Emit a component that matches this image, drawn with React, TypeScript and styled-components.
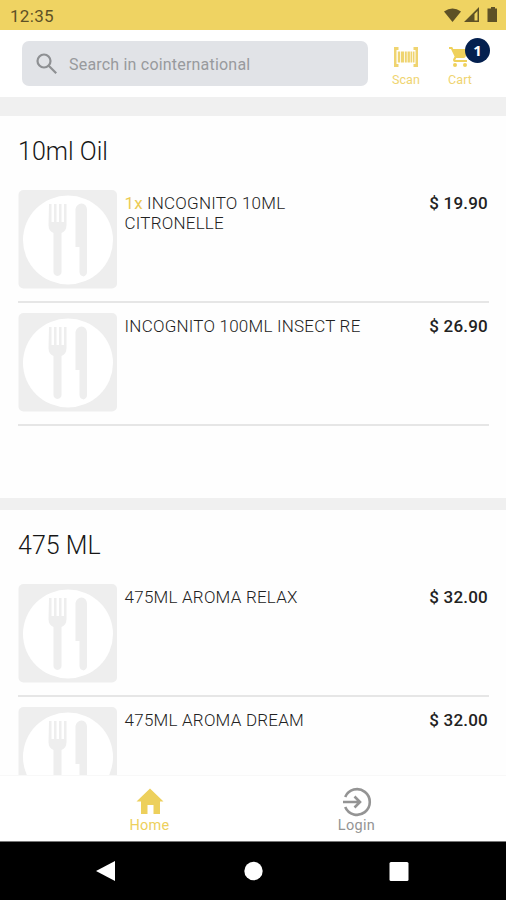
import React from "react";
import styled, { createGlobalStyle } from "styled-components";

const GlobalStyle = createGlobalStyle`
  * { box-sizing: border-box; }
  body { margin: 0; background: #fff; font-family: Roboto, "Liberation Sans", sans-serif; }
`;

const Screen = styled.div`
  width: 506px;
  height: 900px;
  display: flex;
  flex-direction: column;
  overflow: hidden;
  background: #fefefe;
`;

const StatusBar = styled.header`
  flex: none;
  height: 30px;
  padding: 2px 8px 0 10px;
  display: flex;
  align-items: center;
  justify-content: space-between;
  background: #efd362;
  color: #5e5126;
  font-size: 17px;
  letter-spacing: 0.3px;
`;

const StatusIcons = styled.svg`
  display: block;
  width: 56px;
  height: 20px;
`;

const TopBar = styled.div`
  flex: none;
  height: 67px;
  padding: 11px 30px 0 22px;
  display: flex;
  background: #fff;
`;

const SearchField = styled.div`
  width: 346px;
  height: 45px;
  padding: 2px 0 0 14px;
  display: flex;
  align-items: center;
  gap: 11px;
  border-radius: 7px;
  background: #e1e3e7;
  color: #989a9d;
  font-size: 16px;
  letter-spacing: 0.2px;
  white-space: nowrap;

  svg { margin-top: -2px; }
`;

const Action = styled.div<{ $offset: number }>`
  position: relative;
  width: 32px;
  margin-left: ${(p) => p.$offset}px;
  padding-top: 6px;
  display: flex;
  flex-direction: column;
  align-items: center;
  color: #efd470;
  font-size: 12.5px;
  line-height: 15px;
  font-weight: 400;
  letter-spacing: 0.1px;

  svg { display: block; margin-bottom: 4px; }
`;

const Badge = styled.span`
  position: absolute;
  top: -3px;
  left: 21px;
  width: 25px;
  height: 25px;
  border-radius: 50%;
  background: #04204f;
  color: #fff;
  font: 700 15px/25px "Open Sans", sans-serif;
  text-align: center;
`;

const Band = styled.div<{ $height: number }>`
  flex: none;
  height: ${(p) => p.$height}px;
  background: #f0f0f0;
`;

const Catalog = styled.main`
  flex: 1;
  min-height: 0;
  overflow: hidden;
`;

const Section = styled.section<{ $height?: number }>`
  height: ${(p) => (p.$height ? `${p.$height}px` : "auto")};
  padding: 0 17px 0 18px;
`;

const Title = styled.h2`
  margin: 0;
  height: 74px;
  padding-top: 21px;
  font-size: 25px;
  line-height: 30px;
  font-weight: 300;
  letter-spacing: 0.02px;
  color: #161616;
`;

const Item = styled.div`
  height: 123.3px;
  display: flex;
  flex-direction: column;
`;

const ItemBody = styled.div`
  height: 111px;
  display: flex;
  align-items: flex-start;
  font-size: 17px;
  line-height: 20px;
  color: #222;
`;

const Rule = styled.hr`
  width: 100%;
  height: 2px;
  margin: 0;
  border: 0;
  background: #e6e6e6;
`;

const Thumb = styled.svg`
  flex: none;
  display: block;
  width: 99px;
  height: 99px;
  margin-right: 7.6px;
`;

const Name = styled.div`
  width: 250px;
  padding-top: 3px;
  font-weight: 300;
  letter-spacing: 0.22px;
`;

const NameLine = styled.div`
  display: flex;
  gap: 4px;
  white-space: nowrap;
`;

const Quantity = styled.span`
  color: #eccb55;
  font-weight: 400;
`;

const Price = styled.div`
  margin-left: auto;
  padding: 3px 1px 0 0;
  font-weight: 500;
  letter-spacing: 0.2px;
  white-space: nowrap;
`;

const Tabs = styled.nav`
  flex: none;
  height: 66px;
  padding: 0 46px;
  display: grid;
  grid-template-columns: 1fr 1fr;
  border-top: 1px solid #f8f8f8;
  background: #fff;
`;

const Tab = styled.div<{ $color: string }>`
  padding-top: 11px;
  display: flex;
  flex-direction: column;
  align-items: center;
  color: ${(p) => p.$color};
  font-size: 14.5px;
  line-height: 17px;
  letter-spacing: 0.3px;

  svg { display: block; }
`;

const SystemBar = styled.footer`
  flex: none;
  height: 59px;
  padding-top: 18px;
  display: flex;
  justify-content: center;
  background: #000;
  border-top: 1px solid #777;
`;

const Plate = () => (
  <Thumb viewBox="0 0 99 99" fill="#eeeeee">
    <rect x="0.5" y="0" width="98.5" height="98.5" rx="5" />
    <ellipse cx="50" cy="50" rx="45" ry="44.5" fill="#fff" />
    <path d="M31 14h2.500v18h2.500V14h2.500v18h2.500V14h2.500v18h2.500V14h2.500v21q0 6-5 8v39q0 3-4 4q-4-1-4-4V43q-5-2-5-8Z" />
    <path d="M57.500 57V19q1-5 6-5.500q5 .5 5.500 6V82q0 3-3.500 4.500q-4-1-4-4.500V57Z" />
  </Thumb>
);

const ScanIcon = () => (
  <svg width="26" height="21" viewBox="0 0 26 21" fill="#efd470">
    <path d="M1 0h4.500v3H3.500v14h2v3H1ZM20.500 0H25v20h-4.500v-3h2V3h-2Z" />
    <path d="M4.800 4.500h2.400v11H4.800ZM8 4.500h3v11H8ZM11.800 4.500h2v11h-2ZM14.500 4.500h2.400v11h-2.400ZM17.500 4.500h1.800v11h-1.800ZM20 4.500h1.500v11H20Z" />
  </svg>
);

const CartIcon = () => (
  <svg width="22" height="21" viewBox="1 2 22 21" fill="#efd15c">
    <path d="M7 18a2 2 0 1 0 0 4a2 2 0 0 0 0-4ZM1 2v2h2l3.600 7.590-1.350 2.450C4.520 15.370 5.480 17 7 17h12v-2H7.420l-.1-.25.900-1.750h7.450c.75 0 1.410-.41 1.750-1.030L21 4H5.210l-.94-2H1Zm16 16a2 2 0 1 0 0 4a2 2 0 0 0 0-4Z" />
  </svg>
);

type Product = { lines: string[]; price: string; quantity?: string };

const oils: Product[] = [
  { lines: ["INCOGNITO 10ML", "CITRONELLE"], price: "$ 19.90", quantity: "1x" },
  { lines: ["INCOGNITO 100ML INSECT RE"], price: "$ 26.90" },
];

const aromas: Product[] = [
  { lines: ["475ML AROMA RELAX"], price: "$ 32.00" },
  { lines: ["475ML AROMA DREAM"], price: "$ 32.00" },
];

const ProductList = ({ products }: { products: Product[] }) => (
  <>
    {products.map((p) => (
      <Item key={p.lines[0]}>
        <ItemBody>
          <Plate />
          <Name>
            {p.lines.map((line, i) => (
              <NameLine key={line}>
                {i === 0 && p.quantity && <Quantity>{p.quantity}</Quantity>}
                <span>{line}</span>
              </NameLine>
            ))}
          </Name>
          <Price>{p.price}</Price>
        </ItemBody>
        <Rule />
      </Item>
    ))}
  </>
);

export default function App() {
  return (
    <Screen>
      <GlobalStyle />
      <StatusBar>
        <span>12:35</span>
        <StatusIcons viewBox="0 0 56 20" fill="#5e5126">
          <path d="M2 5.500Q10.500-.5 19 5.500L10.500 16Z" />
          <path fillRule="evenodd" d="M37 1v15H22ZM32.500 8V14.500h3V5Z" />
          <path d="M47 2.500h2V1h4v1.500h2V16H45.500V2.500Z" />
        </StatusIcons>
      </StatusBar>
      <TopBar>
        <SearchField>
          <svg width="22" height="22" viewBox="0 0 22 22" fill="none" stroke="#8e9093" strokeWidth="2.200">
            <circle cx="8" cy="8" r="6.500" />
            <path d="m12.700 12.700 7.500 7.500" />
          </svg>
          Search in cointernational
        </SearchField>
        <Action $offset={22}>
          <ScanIcon />
          Scan
        </Action>
        <Action $offset={22}>
          <CartIcon />
          Cart
          <Badge>1</Badge>
        </Action>
      </TopBar>
      <Band $height={19} />
      <Catalog>
        <Section $height={382}>
          <Title>10ml Oil</Title>
          <ProductList products={oils} />
        </Section>
        <Band $height={12} />
        <Section>
          <Title>475 ML</Title>
          <ProductList products={aromas} />
        </Section>
      </Catalog>
      <Tabs>
        <Tab $color="#edd05c">
          <svg width="30" height="30" viewBox="0 0 30 30" fill="#edd05c">
            <path d="M15 1.500 28.500 14.500H25V27h-6.500v-9h-6v9H6V14.500H1.500Z" />
          </svg>
          Home
        </Tab>
        <Tab $color="#949494">
          <svg width="30" height="30" viewBox="0 0 30 30" fill="none" stroke="#949494" strokeWidth="2.600">
            <path d="M3.200 10A12.800 12.800 0 1 1 3.200 20M1 15h16M12.500 9.500 18 15l-5.500 5.500" />
          </svg>
          Login
        </Tab>
      </Tabs>
      <SystemBar>
        <svg width="314" height="22" viewBox="0 0 314 22" fill="#fff">
          <path d="M19 1v20L0 11Z" />
          <circle cx="157.500" cy="11" r="9.200" />
          <rect x="293.500" y="2" width="19" height="19" rx="1.500" />
        </svg>
      </SystemBar>
    </Screen>
  );
}
